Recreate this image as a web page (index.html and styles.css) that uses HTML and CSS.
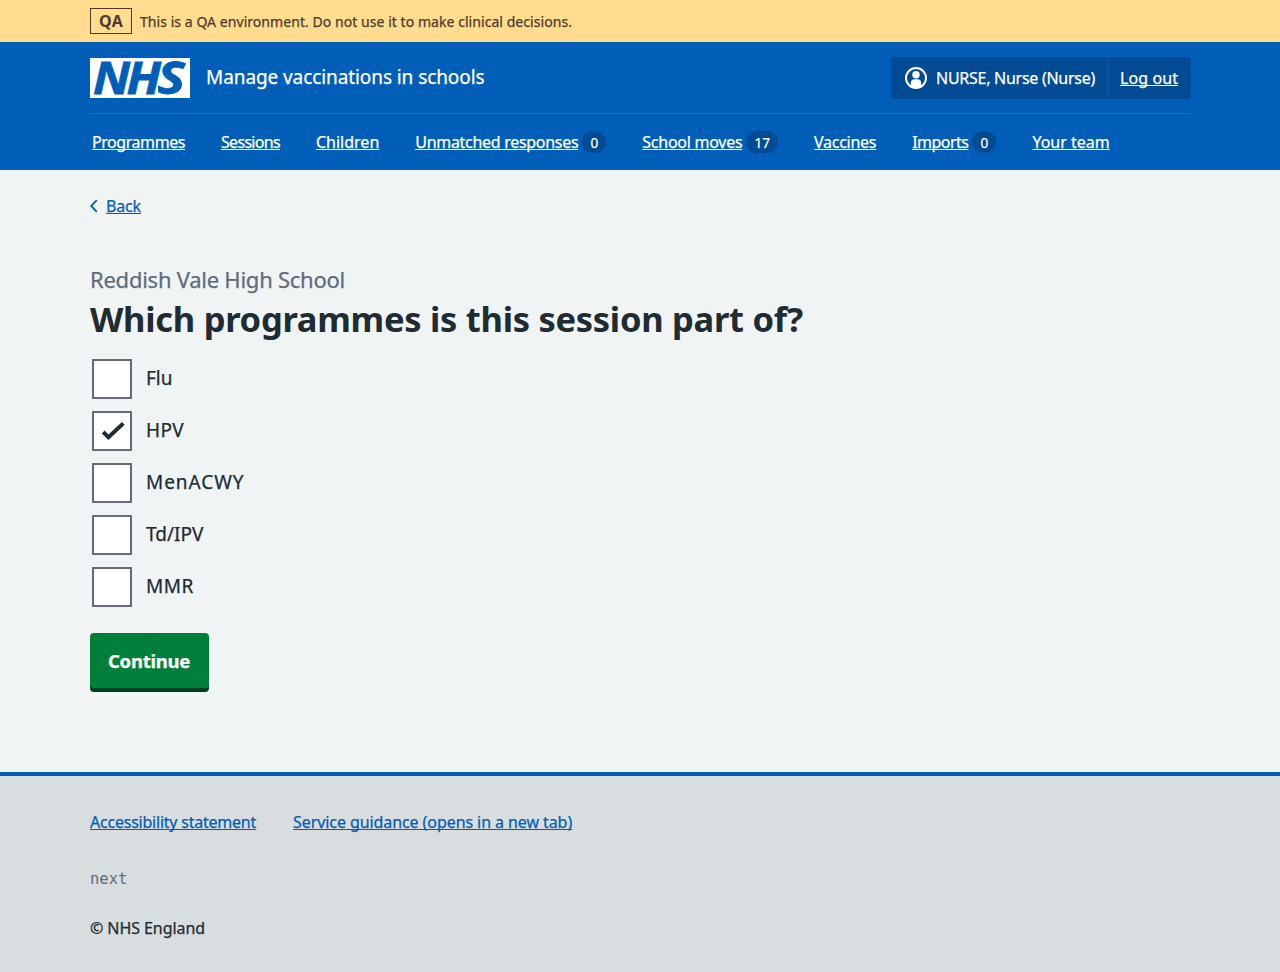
FILE: index.html
```html
<!DOCTYPE html>
<html lang="en">
<head>
<meta charset="utf-8">
<title>Which programmes is this session part of?</title>
<link rel="stylesheet" href="styles.css">
</head>
<body>
<div class="env-banner">
  <div class="container env-banner__inner"><strong class="env-banner__tag">QA</strong><span class="env-banner__text">This is a QA environment. Do not use it to make clinical decisions.</span></div>
</div>
<header class="header">
  <div class="container">
    <div class="header__top">
      <svg class="logo" viewBox="0 0 100 40" role="img" aria-label="NHS"><rect width="100" height="40" fill="#fff"/><g class="logo__text"><text x="3" y="36" textLength="37" lengthAdjust="spacingAndGlyphs">N</text><text x="36.5" y="36" textLength="34.5" lengthAdjust="spacingAndGlyphs">H</text><text x="67.5" y="36" textLength="27.5" lengthAdjust="spacingAndGlyphs">S</text></g></svg>
      <span class="header__service">Manage vaccinations in schools</span>
      <div class="account">
        <div class="account__user">
          <svg class="account__icon" viewBox="0 0 24 24"><circle cx="12" cy="12" r="10" fill="none" stroke="#fff" stroke-width="2"/><circle cx="12" cy="8.7" r="3.7" fill="#fff"/><path d="M6.8 20v-3a3.7 3.7 0 0 1 3.7-3.7h3a3.7 3.7 0 0 1 3.7 3.7v3a10 10 0 0 1-10.4 0z" fill="#fff"/></svg>
          <span class="account__name">NURSE, Nurse (Nurse)</span>
        </div>
        <a class="account__logout" href="#">Log out</a>
      </div>
    </div>
    <nav class="nav">
      <a class="nav__programmes" href="#">Programmes</a>
      <a class="nav__sessions" href="#">Sessions</a>
      <a class="nav__children" href="#">Children</a>
      <span class="nav__item"><a class="nav__responses" href="#">Unmatched responses</a><span class="count">0</span></span>
      <span class="nav__item"><a class="nav__moves" href="#">School moves</a><span class="count">17</span></span>
      <a class="nav__vaccines" href="#">Vaccines</a>
      <span class="nav__item"><a class="nav__imports" href="#">Imports</a><span class="count">0</span></span>
      <a class="nav__team" href="#">Your team</a>
    </nav>
  </div>
</header>
<main class="container main">
  <a class="back" href="#"><svg class="back__icon" viewBox="0 0 8 14"><path d="M6.8 1.2 1.2 7l5.6 5.8" fill="none" stroke="currentColor" stroke-width="1.8"/></svg><span>Back</span></a>
  <h1 class="heading"><span class="heading__caption">Reddish Vale High School</span><span class="heading__title">Which programmes is this session part of?</span></h1>
  <div class="options">
    <label class="option"><span class="box"></span><span class="option__flu">Flu</span></label>
    <label class="option"><span class="box"><svg class="tick" viewBox="0 0 36 36"><path d="M9.2 19l5.3 5.3L29.3 10.4" fill="none" stroke="#212b32" stroke-width="4"/></svg></span><span class="option__hpv">HPV</span></label>
    <label class="option"><span class="box"></span><span class="option__menacwy">MenACWY</span></label>
    <label class="option"><span class="box"></span><span>Td/IPV</span></label>
    <label class="option"><span class="box"></span><span class="option__mmr">MMR</span></label>
  </div>
  <button class="button" type="button">Continue</button>
</main>
<footer class="footer">
  <div class="container">
    <div class="footer__links"><a class="footer__access" href="#">Accessibility statement</a><a class="footer__guide" href="#">Service guidance (opens in a new tab)</a></div>
    <div class="footer__version">next</div>
    <div class="footer__copy">© NHS England</div>
  </div>
</footer>
</body>
</html>
```
FILE: styles.css
```css
* { box-sizing: border-box; }
body {
  margin: 0;
  min-height: 972px;
  display: flex;
  flex-direction: column;
  background: #f0f4f5;
  color: #212b32;
  font: 16px/24px "Noto Sans", sans-serif;
  white-space: nowrap;
  -webkit-text-stroke: .25px;
}
a { color: #005eb8; text-decoration: underline; text-decoration-thickness: 1px; text-underline-offset: 1px; text-decoration-skip-ink: none; }
.container { width: 1100px; margin: 0 auto; }

.env-banner { background: #ffdc8e; color: #4d3b2f; height: 42px; padding: 8px 0; }
.env-banner__inner { display: flex; gap: 8px; }
.env-banner__tag { width: 42px; height: 26px; border: 1px solid; text-align: center; letter-spacing: .2px; -webkit-text-stroke: 0; }
.env-banner__text { font-size: 14px; line-height: 27px; letter-spacing: .055px; }

.header { background: #005eb8; color: #fff; height: 128px; }
.header a { color: #fff; }
.header__top { display: flex; align-items: center; height: 72px; border-bottom: 1px solid #1f72c1; }
.logo { width: 100px; height: 40px; overflow: visible; }
.logo__text { fill: #005eb8; stroke: #005eb8; stroke-width: .8px; font: italic 700 45px "Open Sans", sans-serif; }
.header__service { margin: -2px 0 0 16px; font-size: 19px; letter-spacing: -.086px; }
.account { display: flex; width: 300px; margin: 0 -1px 0 auto; height: 42px; background: #004b93; border-radius: 4px; line-height: 42px; }
.account__user { display: flex; align-items: center; gap: 8px; width: 217px; padding-left: 13px; border-right: 1px solid #005eb8; margin: 1px 0; }
.account__icon { width: 24px; height: 24px; }
.account__name { letter-spacing: -.27px; }
.account__logout { margin-left: 12px; letter-spacing: .083px; }

.nav { display: flex; gap: 36px; padding: 16px 2px; }
.nav__item { display: flex; gap: 4px; }
.nav__programmes { letter-spacing: -.438px; }
.nav__sessions { letter-spacing: -.688px; }
.nav__responses { letter-spacing: -.296px; }
.nav__moves { letter-spacing: -.262px; }
.nav__vaccines { letter-spacing: -.27px; }
.nav__imports { letter-spacing: -.54px; }
.count { height: 22px; margin-top: 1px; padding: 0 8.15px; border-radius: 11px; background: #004b93; font-size: 13.5px; line-height: 24px; }

.main { flex: 1; }
.back { display: flex; align-items: center; gap: 8px; width: max-content; margin-top: 24px; height: 24px; letter-spacing: -.152px; }
.back__icon { width: 8px; height: 14px; }
.heading { margin: 46px 0 0; font-weight: 400; }
.heading__caption { display: block; color: #5f6c7b; font-size: 22px; line-height: 30px; letter-spacing: -.248px; }
.heading__title { display: block; margin-top: 2px; font-size: 34.5px; font-weight: 700; line-height: 46px; letter-spacing: -.278px; -webkit-text-stroke: 0; }
.options { display: grid; gap: 12px; padding: 17px 0 0 2px; }
.option { display: flex; gap: 14px; height: 40px; font-size: 19px; line-height: 38px; }
.box { width: 40px; height: 40px; background: #fff; border: 2px solid #686b7a; }
.tick { display: block; width: 36px; height: 36px; }
.option__hpv { letter-spacing: .339px; }
.option__menacwy { letter-spacing: .95px; }
.option__mmr { letter-spacing: .568px; }
.button { display: block; width: 119px; height: 55px; margin-top: 26px; padding: 0 1px 0 0; border: 0; border-radius: 4px; background: #007f3b; box-shadow: 0 4px 0 #00401e; color: #fff; font: 700 18.5px/55px "Noto Sans", sans-serif; letter-spacing: -.27px; }

.footer { height: 200px; padding-top: 34px; border-top: 4px solid #005eb8; background: #d8dde0; }
.footer__links { display: flex; gap: 37px; }
.footer__access { letter-spacing: -.228px; }
.footer__guide { letter-spacing: -.08px; }
.footer__version { margin-top: 33px; color: #5f6c7b; font: 15.5px/24px "DejaVu Sans Mono", monospace; -webkit-text-stroke: 0; }
.footer__copy { margin-top: 25px; letter-spacing: -.069px; }
```
